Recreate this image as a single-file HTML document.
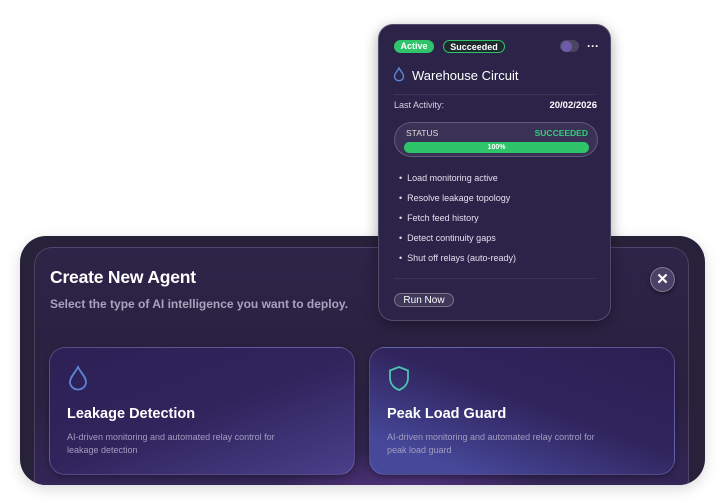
<!DOCTYPE html>
<html><head><style>
*{margin:0;padding:0;box-sizing:border-box}
html,body{width:725px;height:501px;overflow:hidden}
body{background:#fff;position:relative;font-family:"Liberation Sans",sans-serif}
.outer{position:absolute;left:20px;top:236px;width:685px;height:249px;background:#27223a;border-radius:26px;box-shadow:0 4px 14px rgba(0,0,0,.15);overflow:hidden}
.inner{position:absolute;left:14px;top:11px;width:655px;height:250px;border-radius:18px;border:1px solid rgba(255,255,255,.14);background:linear-gradient(180deg,#2d2447,#2a2140 60%,#34265a);overflow:hidden}
.glow{position:absolute;left:220px;top:200px;width:300px;height:120px;background:radial-gradient(ellipse,rgba(130,70,180,.55),transparent 70%)}
h1{position:absolute;left:15px;top:19px;color:#fff;font-size:17.5px;font-weight:bold;letter-spacing:-.2px}
.sub{position:absolute;left:15px;top:49px;color:#a9a3bd;font-size:12px;font-weight:bold}
.card{position:absolute;top:99px;width:306px;height:128px;border-radius:16px;border:1px solid rgba(160,150,220,.35);background:linear-gradient(160deg,#2c2055,#30245c 50%,#4a3f8a);box-shadow:0 2px 6px rgba(0,0,0,.3)}
.card h2{position:absolute;left:17px;top:58px;color:#fff;font-size:14.5px;font-weight:bold}
.card p{position:absolute;left:17px;top:83px;color:#a39cc0;font-size:9px;line-height:13px;width:222px}
.card svg{position:absolute;left:17px;top:17px}
.close{position:absolute;left:650px;top:267px;width:25px;height:25px;border-radius:50%;background:#4a4266;border:1px solid rgba(255,255,255,.3);color:#fff;font-size:15px;font-weight:bold;text-align:center;line-height:23px;box-shadow:0 2px 4px rgba(0,0,0,.4)}
.pop{position:absolute;left:378px;top:24px;width:233px;height:297px;border-radius:15px;background:linear-gradient(180deg,#2c2448,#2b2348);border:1px solid rgba(255,255,255,.18);box-shadow:0 4px 14px rgba(0,0,0,.35)}
.pill{position:absolute;top:15px;height:13px;border-radius:7px;font-size:9px;font-weight:bold;color:#fff;line-height:12px;text-align:center}
.t{position:absolute;color:#fff}
.li{position:absolute;left:20px;color:#e4e0ef;font-size:9px}
</style></head><body>
<div class="outer"><div class="inner">
<div class="glow"></div>
<h1>Create New Agent</h1>
<div class="sub">Select the type of AI intelligence you want to deploy.</div>
<div class="card" style="left:14px">
<svg width="22" height="26" viewBox="0 0 22 26"><path d="M11 2 C8 8 3 12 3 17 A8 7.5 0 0 0 19 17 C19 12 14 8 11 2Z" fill="none" stroke="#5d86d8" stroke-width="1.8"/></svg>
<h2>Leakage Detection</h2><p>AI-driven monitoring and automated relay control for leakage detection</p></div>
<div class="card" style="left:334px;background:linear-gradient(200deg,#2b1f52,#30245c 45%,#46489a 85%)">
<svg width="24" height="28" viewBox="0 0 24 28"><path d="M12 2 L21 5.5 V13 C21 19 17 23 12 25 C7 23 3 19 3 13 V5.5Z" fill="none" stroke="#4cc5b0" stroke-width="1.8"/></svg>
<h2>Peak Load Guard</h2><p>AI-driven monitoring and automated relay control for peak load guard</p></div>
</div></div>
<div class="close">✕</div>
<div class="pop">
<div class="pill" style="left:15px;width:40px;background:#2fc46a">Active</div>
<div class="pill" style="left:64px;width:62px;border:1px solid #2fc46a;background:#1f2a2f">Succeeded</div>
<div style="position:absolute;left:181px;top:15px;width:19px;height:12px;border-radius:6px;background:#4a4560"><div style="width:11px;height:11px;border-radius:50%;background:#6e5aa8;margin:.5px"></div></div>
<div class="t" style="left:208px;top:14px;font-size:12px;font-weight:bold">···</div>
<svg style="position:absolute;left:14px;top:42px" width="12" height="15" viewBox="0 0 12 15"><path d="M6 1 C4.5 4 1.5 6.5 1.5 9.5 A4.5 4.2 0 0 0 10.5 9.5 C10.5 6.5 7.5 4 6 1Z" fill="none" stroke="#5d86d8" stroke-width="1.4"/></svg>
<div class="t" style="left:33px;top:43px;font-size:13px">Warehouse Circuit</div>
<div style="position:absolute;left:15px;right:15px;top:69px;border-top:1px solid rgba(255,255,255,.08)"></div>
<div class="t" style="left:15px;top:75px;font-size:9px;color:#d4cfe2">Last Activity:</div>
<div class="t" style="right:13px;top:75px;font-size:9.5px;font-weight:bold">20/02/2026</div>
<div style="position:absolute;left:15px;top:97px;width:204px;height:35px;border-radius:18px;background:#3a3256;border:1px solid rgba(255,255,255,.2)">
<div class="t" style="left:11px;top:5px;font-size:8.5px;color:#ddd">STATUS</div>
<div class="t" style="right:9px;top:5px;font-size:8.5px;color:#34d07a;font-weight:bold">SUCCEEDED</div>
<div style="position:absolute;left:9px;top:19px;width:185px;height:11px;border-radius:6px;background:#2fc46a;color:#fff;font-size:7px;font-weight:bold;text-align:center;line-height:11px">100%</div></div>
<div class="li" style="top:148px">•&nbsp; Load monitoring active</div>
<div class="li" style="top:168px">•&nbsp; Resolve leakage topology</div>
<div class="li" style="top:188px">•&nbsp; Fetch feed history</div>
<div class="li" style="top:208px">•&nbsp; Detect continuity gaps</div>
<div class="li" style="top:228px">•&nbsp; Shut off relays (auto-ready)</div>
<div style="position:absolute;left:15px;right:15px;top:253px;border-top:1px solid rgba(255,255,255,.08)"></div>
<div style="position:absolute;left:15px;top:268px;width:60px;height:14px;border-radius:8px;background:#3e3758;border:1px solid rgba(255,255,255,.3);color:#fff;font-size:10px;text-align:center;line-height:14px">Run Now</div>
</div>
</body></html>
